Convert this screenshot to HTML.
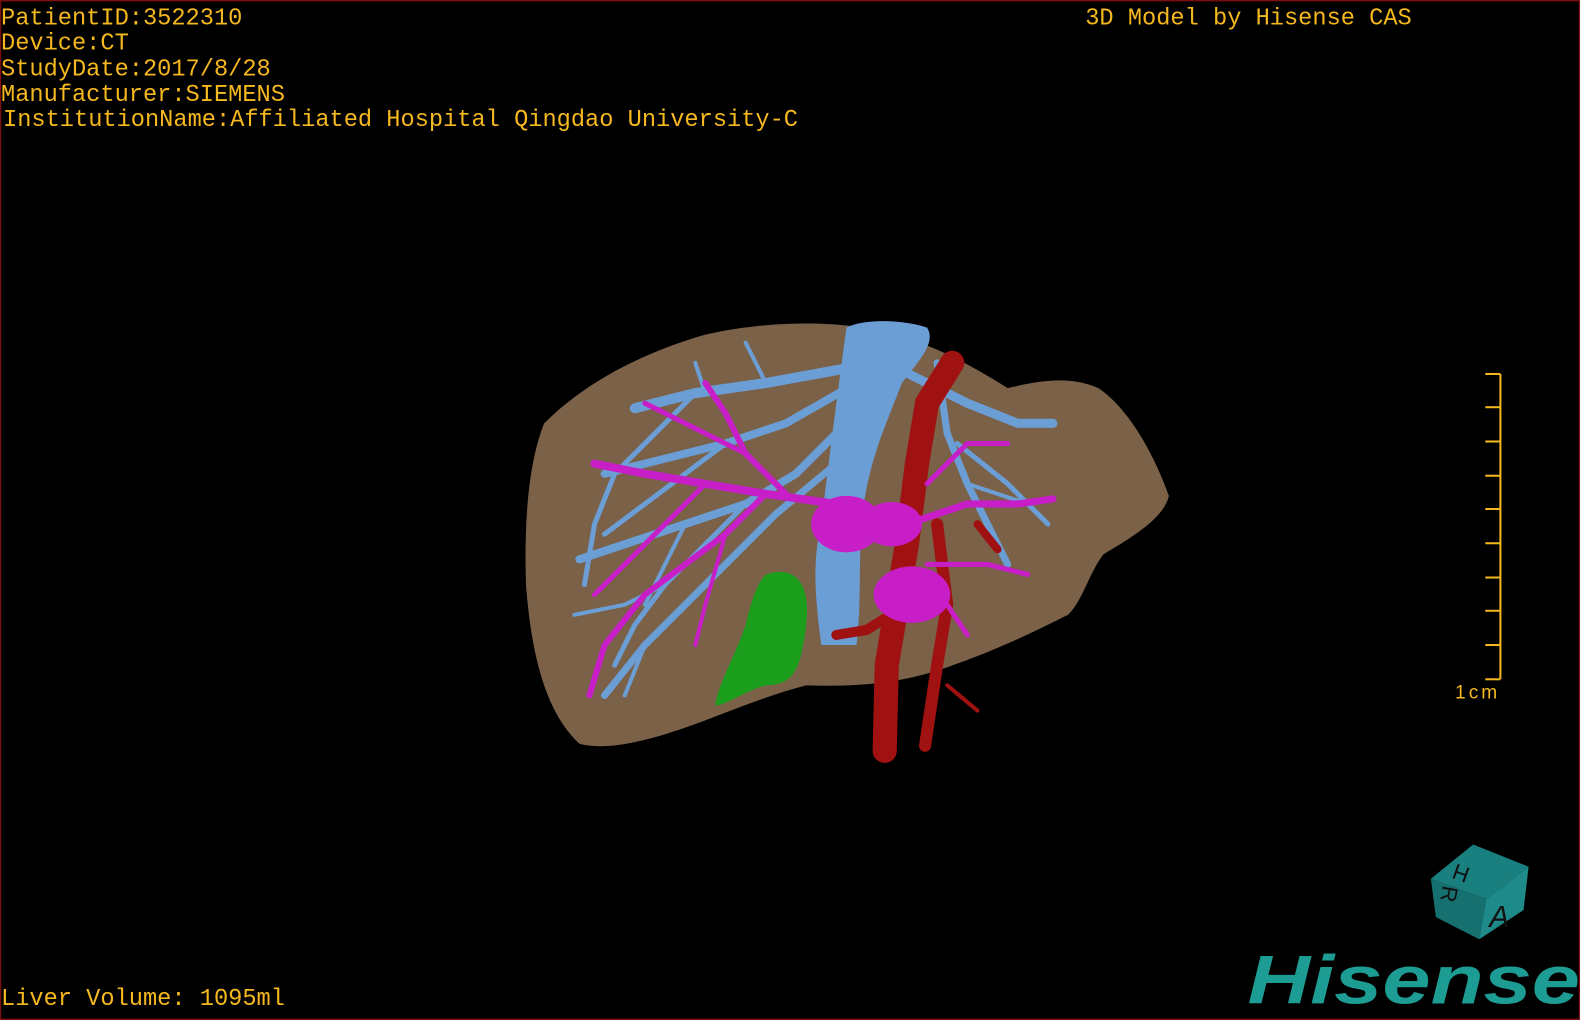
<!DOCTYPE html>
<html><head><meta charset="utf-8"><style>
html,body{margin:0;padding:0;background:#000;width:1580px;height:1020px;overflow:hidden}
svg{display:block}
text{font-family:"Liberation Mono","Noto Sans CJK SC",monospace;fill:#f5b81e}
</style></head><body>
<svg width="1580" height="1020" viewBox="0 0 1568 1012" xmlns="http://www.w3.org/2000/svg">
<rect x="0" y="0" width="1568" height="1012" fill="#000"/>
<rect x="0.5" y="0.5" width="1567" height="1011" fill="none" stroke="#7a0d0d" stroke-width="1.5"/>
<g font-size="23.5">
<text x="1" y="24">PatientID:3522310</text>
<text x="1" y="49">Device:CT</text>
<text x="1" y="75">StudyDate:2017/8/28</text>
<text x="1" y="100">Manufacturer:SIEMENS</text>
<text x="3" y="125">InstitutionName:Affiliated Hospital Qingdao University-C</text>
<text x="1077" y="24">3D Model by Hisense CAS</text>
<text x="1" y="997">Liver Volume: 1095ml</text>
</g>
<g stroke="#f5b81e" stroke-width="2">
<line x1="1489" y1="371" x2="1489" y2="674"/>
<line x1="1474" y1="371" x2="1489" y2="371"/><line x1="1474" y1="404" x2="1489" y2="404"/>
<line x1="1474" y1="438" x2="1489" y2="438"/><line x1="1474" y1="472" x2="1489" y2="472"/>
<line x1="1474" y1="505" x2="1489" y2="505"/><line x1="1474" y1="539" x2="1489" y2="539"/>
<line x1="1474" y1="573" x2="1489" y2="573"/><line x1="1474" y1="606" x2="1489" y2="606"/>
<line x1="1474" y1="640" x2="1489" y2="640"/><line x1="1474" y1="674" x2="1489" y2="674"/>
</g>
<text x="1444" y="693" font-size="19" letter-spacing="3" style="font-family:'Liberation Sans',sans-serif">1cm</text>
<path d="M540,420 C570,390 620,355 700,332 C760,318 830,318 870,328 C920,338 960,360 1000,385 C1030,378 1060,372 1090,385 C1120,405 1145,450 1160,492 C1155,515 1120,535 1095,550 C1080,570 1075,595 1060,610 C1030,625 990,645 940,662 C900,676 860,682 800,680 C760,690 720,708 680,722 C640,736 600,745 575,738 C545,710 528,660 522,580 C520,520 524,460 540,420 Z" fill="#7a6148"/>
<path d="M760,570 C790,560 805,580 800,620 C795,660 790,680 760,680 C740,685 720,700 710,700 C712,680 730,650 740,620 C745,600 750,580 760,570 Z" fill="#1b9e1b"/>
<path d="M840,325 C860,315 900,318 920,325 C930,340 910,360 895,380 C880,420 860,460 855,520 C852,560 855,600 850,640 L815,640 C810,600 805,560 815,520 C822,460 830,400 840,325 Z" fill="#6c9ed6"/>
<g stroke="#6c9ed6" stroke-linecap="round" fill="none">
<path d="M870,360 L760,380 L690,390 L630,405" stroke-width="10"/>
<path d="M850,380 L780,420 L720,440 L660,455 L600,470" stroke-width="8"/>
<path d="M840,420 L790,470 L740,500 L680,520 L620,540 L575,555" stroke-width="8"/>
<path d="M830,460 L770,510 L720,560 L680,600 L640,640 L600,690" stroke-width="7"/>
<path d="M740,500 L700,540 L660,580 L630,620 L610,660" stroke-width="5"/>
<path d="M690,390 L650,430 L610,470 L590,520 L580,580" stroke-width="5"/>
<path d="M720,440 L680,470 L640,500 L600,530" stroke-width="5"/>
<path d="M660,580 L620,600 L570,610" stroke-width="4"/>
<path d="M760,380 L740,340" stroke-width="4"/>
<path d="M700,390 L690,360" stroke-width="4"/>
<path d="M900,370 L960,400 L1010,420 L1045,420" stroke-width="9"/>
<path d="M930,360 L940,430 L960,480 L980,520 L1000,560" stroke-width="7"/>
<path d="M950,440 L1000,480 L1040,520" stroke-width="5"/>
<path d="M960,480 L1020,500" stroke-width="4"/>
<path d="M640,640 L620,690" stroke-width="4"/>
<path d="M680,520 L660,560 L640,600" stroke-width="4"/>
</g>
<g stroke="#a01212" stroke-linecap="round" fill="none">
<path d="M945,360 L920,400 L910,460 L900,540 L890,600 L880,660 L878,745" stroke-width="24"/>
<path d="M930,520 L940,600 L930,660 L918,740" stroke-width="12"/>
<path d="M900,600 L860,625 L830,630" stroke-width="10"/>
<path d="M940,680 L970,705" stroke-width="4"/>
<path d="M970,520 L990,545" stroke-width="8"/>
</g>
<g fill="#c81ec8">
<ellipse cx="840" cy="520" rx="35" ry="28"/>
<ellipse cx="905" cy="590" rx="38" ry="28"/>
<ellipse cx="885" cy="520" rx="30" ry="22"/>
</g>
<g stroke="#c81ec8" stroke-linecap="round" fill="none">
<path d="M830,500 L760,490 L700,480 L640,470 L590,460" stroke-width="8"/>
<path d="M780,490 L740,450 L720,410 L700,380" stroke-width="6"/>
<path d="M760,490 L720,530 L680,560 L640,590 L600,640 L585,690" stroke-width="6"/>
<path d="M700,480 L660,520 L620,560 L590,590" stroke-width="5"/>
<path d="M740,450 L680,420 L640,400" stroke-width="5"/>
<path d="M720,530 L700,600 L690,640" stroke-width="4"/>
<path d="M900,520 L960,500 L1010,500 L1045,495" stroke-width="7"/>
<path d="M920,480 L960,440 L1000,440" stroke-width="5"/>
<path d="M920,560 L980,560 L1020,570" stroke-width="5"/>
<path d="M940,600 L960,630" stroke-width="5"/>
</g>
<g>
<polygon points="1420,872 1462,838 1517,860 1475,892" fill="#1a7f7f"/>
<polygon points="1420,872 1475,892 1468,932 1425,910" fill="#167070"/>
<polygon points="1475,892 1517,860 1512,903 1468,932" fill="#1e8a8a"/>
<text x="1478" y="920" font-size="30" style="fill:#111;font-family:'Liberation Sans',sans-serif;font-style:italic">A</text>
<text x="0" y="0" font-size="22" transform="translate(1460,862) rotate(200)" style="fill:#111;font-family:'Liberation Sans',sans-serif">H</text>
<text x="0" y="0" font-size="22" transform="translate(1432,878) rotate(100)" style="fill:#111;font-family:'Liberation Sans',sans-serif">R</text>
</g>
<text x="1238" y="996" font-size="68" font-weight="bold" style="fill:#1c9c93;font-family:'Liberation Sans',sans-serif;font-style:italic" textLength="330" lengthAdjust="spacingAndGlyphs">Hisense</text>
</svg>
</body></html>
